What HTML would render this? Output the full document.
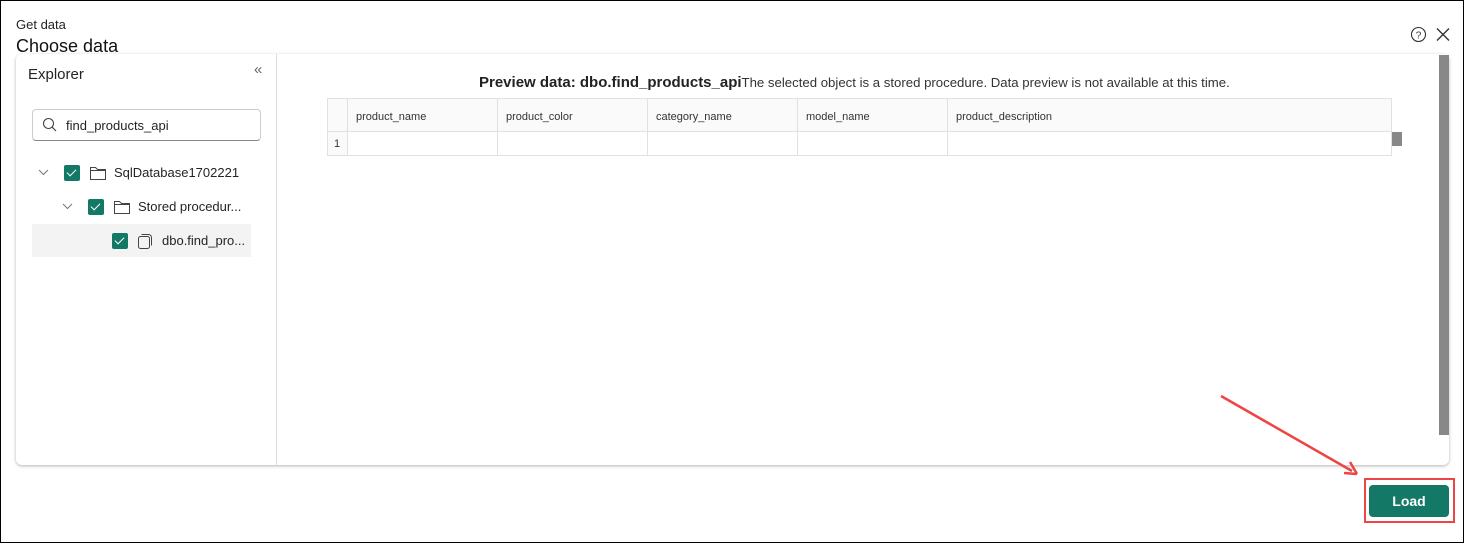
<!DOCTYPE html>
<html><head><style>
*{box-sizing:border-box;margin:0;padding:0}
body{width:1464px;height:543px;position:relative;background:#fff;font-family:"Liberation Sans","DejaVu Sans",sans-serif;color:#242424;overflow:hidden}
.frame{position:absolute;left:0;top:0;width:1464px;height:543px;border:1px solid #000}
.a{position:absolute}
table{border-collapse:collapse;position:absolute;left:327px;top:98px}
td{border:1px solid #e1e1e1;font-size:11px;padding-left:8px;color:#333;padding-top:3px}
.chk{position:absolute;width:16px;height:16px;background:#137866;border-radius:2px}
.chk:after{content:"";position:absolute;left:5px;top:2px;width:4px;height:8px;border:solid #fff;border-width:0 1.5px 1.5px 0;transform:rotate(45deg)}
</style></head><body>
<div class="frame"></div>
<div class="a" style="left:16px;top:17px;font-size:13px">Get data</div>
<div class="a" style="left:16px;top:36px;font-size:18px;color:#111">Choose data</div>
<svg class="a" style="left:1410px;top:26px" width="42" height="18"><circle cx="8.5" cy="8.5" r="7" fill="none" stroke="#333" stroke-width="1.1"/><text x="8.5" y="12.5" font-size="10" text-anchor="middle" fill="#333" font-family="Liberation Sans">?</text><path d="M27 2.5L39 14.5M39 2.5L27 14.5" stroke="#333" stroke-width="1.4"/></svg>
<div class="a" style="left:16px;top:54px;width:1433px;height:411px;border-radius:6px;box-shadow:0 1px 3px rgba(0,0,0,.3);background:#fff"></div>
<div class="a" style="left:276px;top:54px;width:1px;height:411px;background:#ddd"></div>
<div class="a" style="left:28px;top:66px;font-size:15px">Explorer</div>
<div class="a" style="left:254px;top:61px;font-size:15px;color:#666">«</div>
<div class="a" style="left:32px;top:109px;width:229px;height:32px;border:1px solid #ccc;border-bottom-color:#888;border-radius:4px"></div>
<svg class="a" style="left:42px;top:117px" width="16" height="16"><circle cx="6.5" cy="6.5" r="5" fill="none" stroke="#444" stroke-width="1.1"/><path d="M10 10L14 14" stroke="#444" stroke-width="1.2"/></svg>
<div class="a" style="left:66px;top:118px;font-size:13px">find_products_api</div>
<div class="a" style="left:32px;top:224px;width:219px;height:33px;background:#f3f3f3"></div>
<svg class="a" style="left:38px;top:169px" width="12" height="8"><path d="M1 1l4.5 4.5L10 1" fill="none" stroke="#777"/></svg>
<svg class="a" style="left:62px;top:203px" width="12" height="8"><path d="M1 1l4.5 4.5L10 1" fill="none" stroke="#777"/></svg>
<div class="chk" style="left:64px;top:165px"></div>
<div class="chk" style="left:88px;top:199px"></div>
<div class="chk" style="left:112px;top:233px"></div>
<svg class="a" style="left:89px;top:165px" width="18" height="16"><path d="M1.5 2.5h5l2 2h8v10h-15z" fill="none" stroke="#444" stroke-width="1"/><path d="M1.5 5.5h15" stroke="#444"/></svg>
<svg class="a" style="left:113px;top:199px" width="18" height="16"><path d="M1.5 2.5h5l2 2h8v10h-15z" fill="none" stroke="#444" stroke-width="1"/><path d="M1.5 5.5h15" stroke="#444"/></svg>
<svg class="a" style="left:137px;top:232px" width="18" height="18"><rect x="1.5" y="4.5" width="11" height="12" rx="2" fill="none" stroke="#444"/><path d="M4.5 2.5h7a3 3 0 0 1 3 3v8" fill="none" stroke="#444"/></svg>
<div class="a" style="left:114px;top:165px;font-size:13px">SqlDatabase1702221</div>
<div class="a" style="left:138px;top:199px;font-size:13px">Stored procedur...</div>
<div class="a" style="left:162px;top:233px;font-size:13px">dbo.find_pro...</div>
<div class="a" style="left:479px;top:74px;font-size:15px;font-weight:bold;color:#222;white-space:nowrap">Preview data: dbo.find_products_api<span style="font-weight:normal;font-size:13.2px;color:#333">The selected object is a stored procedure. Data preview is not available at this time.</span></div>
<table>
<tr style="height:33px;background:#fafafa"><td style="width:20px"></td><td style="width:150px">product_name</td><td style="width:150px">product_color</td><td style="width:150px">category_name</td><td style="width:150px">model_name</td><td style="width:444px">product_description</td></tr>
<tr style="height:24px"><td style="padding-left:6px;padding-top:1px;background:#fafafa">1</td><td></td><td></td><td></td><td></td><td></td></tr>
</table>
<div class="a" style="left:1392px;top:132px;width:10px;height:14px;background:#888"></div>
<div class="a" style="left:1439px;top:55px;width:10px;height:380px;background:#888"></div>
<svg class="a" style="left:0;top:0" width="1464" height="543"><path d="M1221 396L1352 471" stroke="#ef4444" stroke-width="2.5"/><path d="M1357 474L1344 473M1357 474L1350 462" stroke="#ef4444" stroke-width="2.5"/></svg>
<div class="a" style="left:1364px;top:478px;width:91px;height:45px;border:2px solid #ef4444"></div>
<div class="a" style="left:1369px;top:485px;width:80px;height:32px;background:#137866;border-radius:4px;color:#fff;font-size:14px;font-weight:bold;text-align:center;line-height:32px">Load</div>
</body></html>
